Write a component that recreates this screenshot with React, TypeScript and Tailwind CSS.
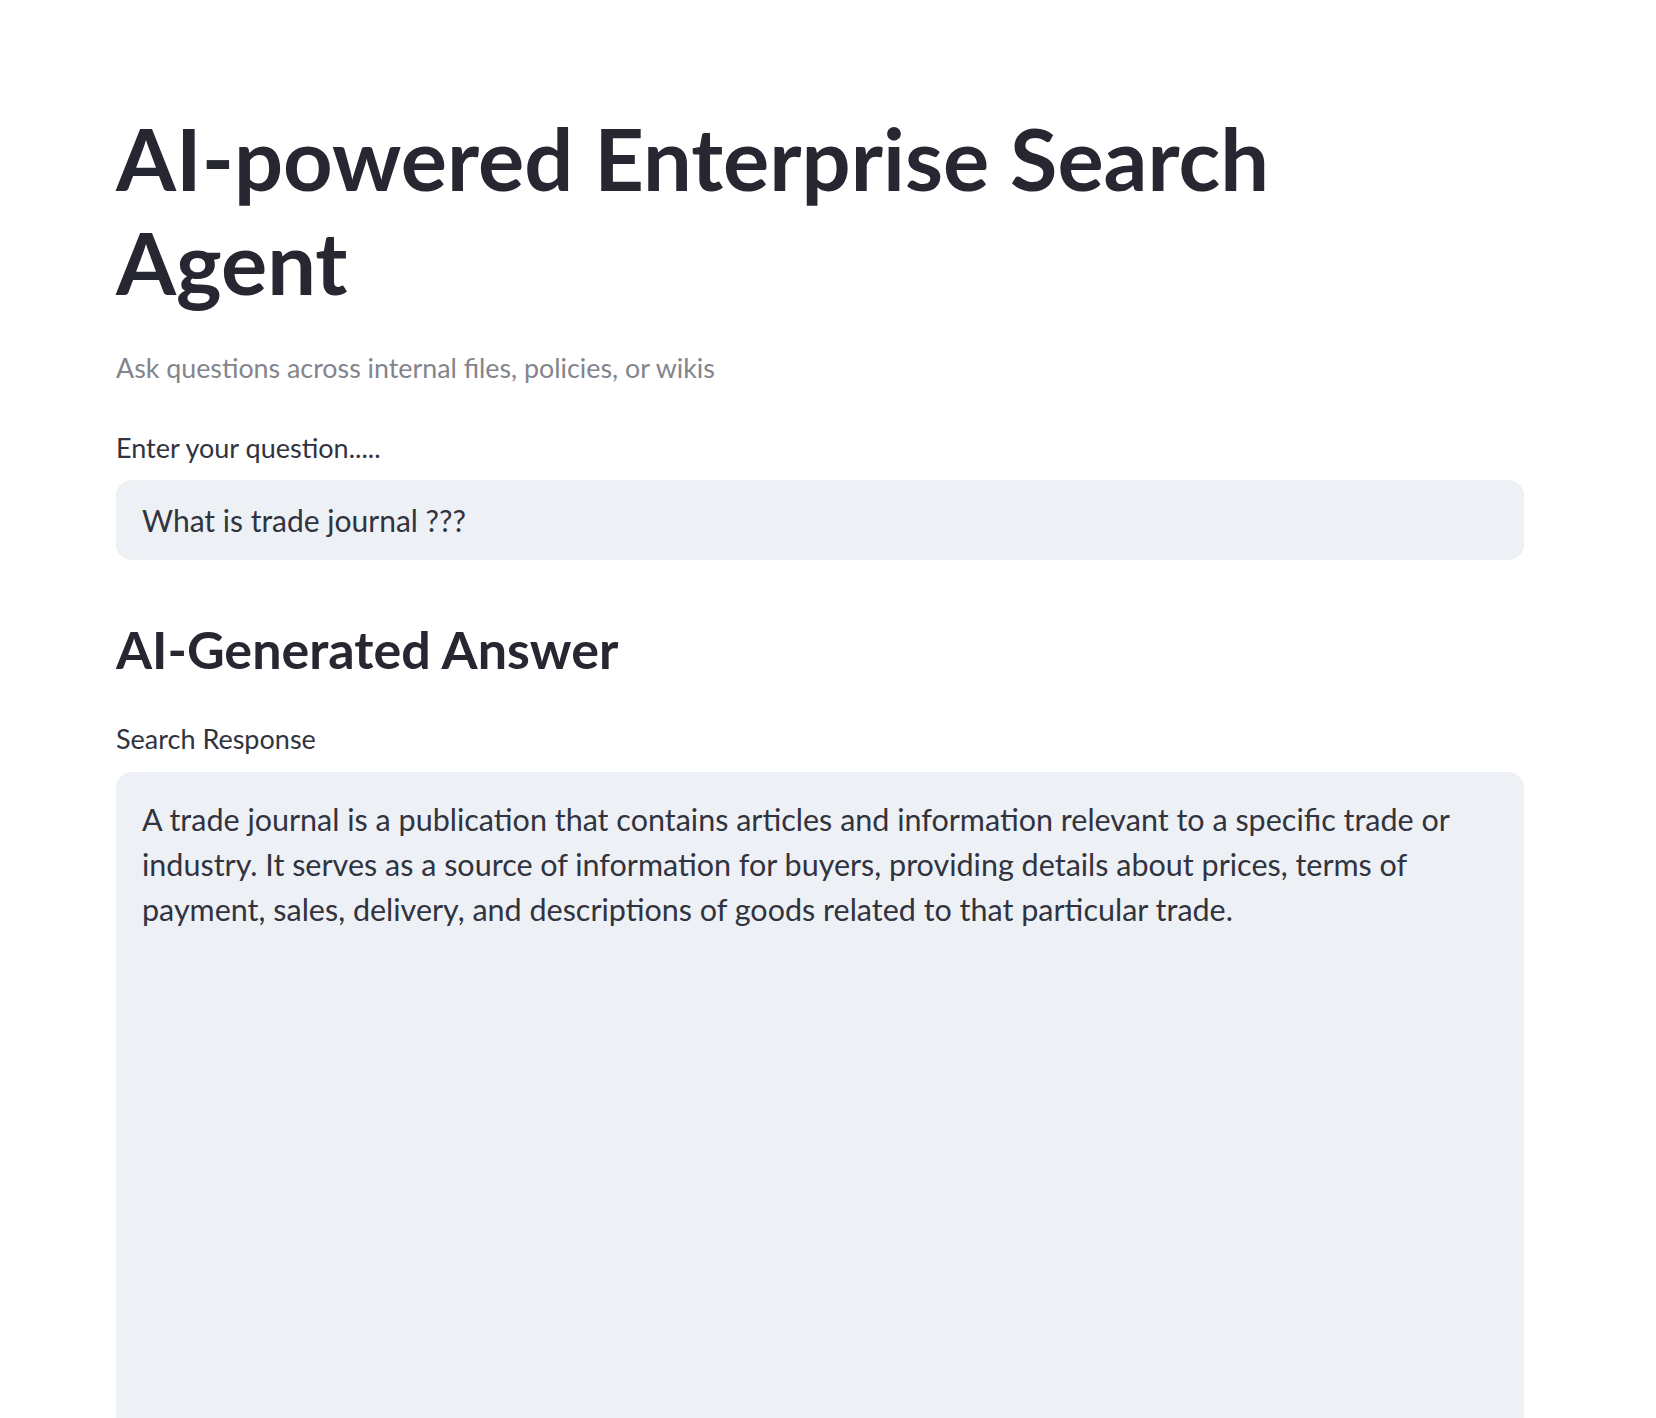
const FONT = "font-['Lato','Noto_Sans',sans-serif]";

export default function App() {
  return (
    <div className={`h-[1418px] w-full overflow-hidden bg-white ${FONT}`}>
      <div className="ml-[116px] w-[1408px] pt-[106px]">
        {/* page title */}
        <h1 className="text-[86.5px] font-bold leading-[104px] text-[#262730]">
          AI-powered Enterprise Search
          <br />
          Agent
        </h1>

        <p className="mt-[34px] text-[26.8px] leading-[40px] text-[#83858c]">
          Ask questions across internal files, policies, or wikis
        </p>

        <label className="mt-[40px] block text-[27px] leading-[40px] text-[#31333f]">
          Enter your question.....
        </label>
        <div className="mt-[12px] flex h-[80px] items-center rounded-[16px] bg-[#edf0f4] pl-[26px]">
          <span className="text-[30px] text-[#31333f]">What is trade journal ???</span>
        </div>

        <h2 className="mt-[54px] text-[52px] font-bold leading-[70px] text-[#262730]">
          AI-Generated Answer
        </h2>

        <label className="mt-[35px] block text-[27px] leading-[40px] text-[#31333f]">
          Search Response
        </label>
        <div className="mt-[13px] h-[800px] rounded-[16px] bg-[#edf0f4] px-[26px] pt-[25px]">
          <p className="text-[30.5px] leading-[44.8px] text-[#31333f]">
            A trade journal is a publication that contains articles and information relevant to a specific trade or
            <br />
            industry. It serves as a source of information for buyers, providing details about prices, terms of
            <br />
            payment, sales, delivery, and descriptions of goods related to that particular trade.
          </p>
        </div>
      </div>
    </div>
  );
}
